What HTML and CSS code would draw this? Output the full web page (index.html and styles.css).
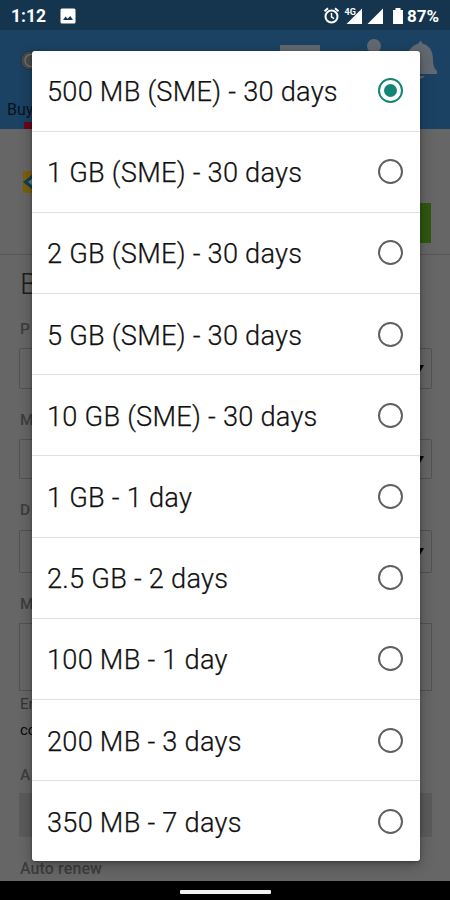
FILE: index.html
```html
<!DOCTYPE html>
<html lang="en">
<head>
<meta charset="utf-8">
<title>Buy data</title>
<link rel="stylesheet" href="styles.css">
</head>
<body>
<div class="screen">
  <div class="status">
    <span class="time">1:12</span>
    <svg class="photo" width="16" height="16" viewBox="0 0 16 16"><rect x=".5" y=".5" width="15" height="15" rx="1.5" fill="#fff"/><path d="M3 12l2.600-3.400 2 2.200L10.300 8 13 12z" fill="#15344e"/></svg>
    <svg class="icons" width="82" height="18" viewBox="0 0 82 18">
      <g fill="none" stroke="#fff" stroke-width="2"><circle cx="8.500" cy="9.500" r="6"/><path d="M1.500 4.200l3.500-2.900M15.500 4.200l-3.500-2.900"/><path d="M8.500 6v4l2.600 1.600" stroke-width="1.500"/></g>
      <path d="M39 1.500v15.500H23.500zM60 1.500v15.500H44.500z" fill="#fff"/>
      <path d="M21 0h12v8H21z" fill="#15344e"/>
      <text x="21.500" y="8" class="net">4G</text>
      <path d="M70 3h2.500V1h5v2H80v14H70z" fill="#fff"/>
    </svg>
    <span class="pct">87%</span>
  </div>
  <header class="top">
    <svg class="topart" width="450" height="99" viewBox="0 0 450 99">
      <circle cx="30" cy="30.500" r="9" fill="#474b4d" stroke="#2d3439" stroke-width="1"/><circle cx="31" cy="30.500" r="6" fill="none" stroke="#777" stroke-width="1.200"/>
      <path d="M280 15h40v8h-40z" fill="#636970"/>
      <circle cx="374" cy="16" r="7" fill="#636970"/>
      <path d="M418.500 13.500q2-5 4 0C430 16 433 21 433 30q0 8 4 11v3h-34v-3q4-3 4-11c0-9 4-14 11.500-16.500zM414 46h11q-5.500 6-11 0z" fill="#636970"/>
      <path d="M24 92h30v7H24z" fill="#6b071b"/>
    </svg>
    <span class="tab">Buy</span>
  </header>
  <main class="page">
    <section class="account">
      <svg width="40" height="22" viewBox="0 0 40 22"><path d="M0 0h40v22H0z" fill="#7b610b"/><path d="M0 11L10 3h20v16H10z" fill="#103f50"/><path d="M5 11l5-4v8z" fill="#5b8289"/></svg>
      <div class="buy"></div>
    </section>
    <h1>B</h1>
    <label>P</label><div class="select"><i></i></div>
    <label>M</label><div class="select second"><i></i></div>
    <label>D</label><div class="select third"><i></i></div>
    <label>M</label><div class="area"></div>
    <p class="hint">En</p><p class="contacts">co</p>
    <label class="amount">A</label><div class="readonly"></div>
    <label class="renew">Auto renew</label>
  </main>
  <div class="nav"><span></span></div>
  <div class="dialog" role="radiogroup">
    <div class="row on"><span>500 MB (SME) - 30 days</span><b></b></div>
    <div class="row"><span>1 GB (SME) - 30 days</span><b></b></div>
    <div class="row"><span>2 GB (SME) - 30 days</span><b></b></div>
    <div class="row"><span>5 GB (SME) - 30 days</span><b></b></div>
    <div class="row"><span>10 GB (SME) - 30 days</span><b></b></div>
    <div class="row"><span>1 GB - 1 day</span><b></b></div>
    <div class="row"><span>2.5 GB - 2 days</span><b></b></div>
    <div class="row"><span>100 MB - 1 day</span><b></b></div>
    <div class="row"><span>200 MB - 3 days</span><b></b></div>
    <div class="row"><span>350 MB - 7 days</span><b></b></div>
  </div>
</div>
</body>
</html>
```
FILE: styles.css
```css
* { box-sizing: border-box; }
body { margin: 0; font-family: Roboto, sans-serif; }
.screen { position: relative; width: 450px; height: 900px; overflow: hidden; background: #666; display: flex; flex-direction: column; }
.status { height: 30px; flex: none; background: #15344e; color: #fff; display: flex; align-items: center; padding: 2px 9px 0 11px; font-weight: 700; font-size: 17.5px; }
.time { width: 49px; }
.icons { margin: 0 2px 0 auto; }
.net { font: 700 9px Roboto, sans-serif; fill: #fff; }
.pct { font-size: 17px; width: 34px; }
.top { position: relative; height: 99px; flex: none; background: #1b4263; }
.topart { display: block; }
.tab { position: absolute; left: 7px; top: 70px; font-size: 16px; line-height: 20px; color: #07131f; }
.page { flex: 1; padding: 0 19px; overflow: hidden; }
.account { height: 126px; margin: 0 -19px; padding: 42px 19px 0 23px; display: flex; justify-content: space-between; border-bottom: 1px solid #565656; }
.buy { width: 60px; height: 40px; margin-top: 32px; background: #2e5710; }
h1 { margin: 12px 0 18px 1px; font-size: 29px; line-height: 34px; font-weight: 300; color: #1c1c1c; }
label { display: block; height: 20px; line-height: 20px; font-size: 15.5px; font-weight: 500; color: #3d3d3d; margin-left: 1px; }
.select { height: 41px; margin: 9px -1px 21px 0; border: 1px solid #525252; border-radius: 2px; display: flex; justify-content: flex-end; align-items: center; padding-right: 7px; }
.select i { border: solid transparent; border-width: 7px 4.5px 0; border-top-color: #000; }
.second { height: 40px; }
.third { height: 43px; margin-top: 10px; }
.area { height: 68px; margin: 9px -1px 4px 0; border: 1px solid #525252; }
p { margin: 0 0 0 1px; font-size: 15px; line-height: 18px; }
.hint { color: #333; }
.contacts { color: #090909; margin-top: 8px; }
.amount { margin-top: 26px; }
.readonly { height: 44px; margin: 8px -1px 22px 0; background: #5b5b5b; }
.renew { font-size: 16px; letter-spacing: .1px; }
.nav { height: 19px; flex: none; background: #000; display: flex; justify-content: center; padding-top: 9px; }
.nav span { width: 91px; height: 4px; border-radius: 1px; background: #f2f2f2; }
.dialog { position: absolute; left: 32px; top: 50.5px; width: 387.5px; height: 810px; overflow: hidden; border-radius: 3px; background: #fff; box-shadow: 0 4px 14px rgba(0,0,0,.3), 0 1px 3px rgba(0,0,0,.3); }
.row { height: 81.2px; display: flex; align-items: center; justify-content: space-between; padding: 3px 17px 0 15px; border-bottom: 1px solid #e0e0e0; font-size: 27.2px; font-weight: 300; letter-spacing: .25px; color: #111; -webkit-text-stroke: .25px #111; }
.row:last-child { border: 0; }
.row b { width: 25px; height: 25px; margin-top: -3px; border: 2px solid #606060; border-radius: 50%; display: grid; place-items: center; }
.on b { border-color: #128574; }
.on b::after { content: ""; width: 13px; height: 13px; border-radius: 50%; background: #128574; }
```
